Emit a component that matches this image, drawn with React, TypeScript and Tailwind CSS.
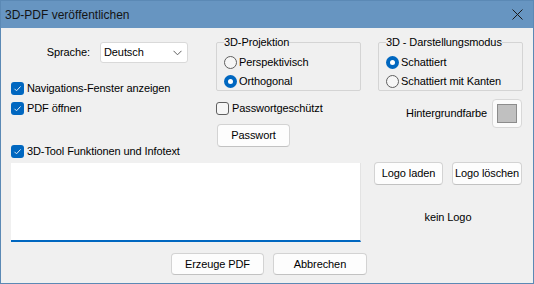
import React from "react";

function Check({ checked, label }: { checked: boolean; label: string }) {
  return (
    <div className="flex items-center h-[13px]">
      {checked ? (
        <span className="w-[13px] h-[13px] rounded-[3px] bg-[#0067c0] flex items-center justify-center shrink-0">
          <svg width="9" height="9" viewBox="0 0 9 9">
            <path d="M1.5 4.8 L3.5 6.8 L7.6 2.4" stroke="#dfeaf6" strokeWidth="1" fill="none" />
          </svg>
        </span>
      ) : (
        <span className="w-[13px] h-[13px] rounded-[3px] border border-[#5f5f5f] bg-[#f6f6f6] shrink-0" />
      )}
      <span className="ml-[3px] leading-[13px] whitespace-nowrap">{label}</span>
    </div>
  );
}

function Radio({ checked, label }: { checked: boolean; label: string }) {
  return (
    <div className="flex items-center h-[13px]">
      {checked ? (
        <span className="w-[13px] h-[13px] rounded-full bg-[#0067c0] flex items-center justify-center shrink-0">
          <span className="w-[5px] h-[5px] rounded-full bg-white" />
        </span>
      ) : (
        <span className="w-[13px] h-[13px] rounded-full border border-[#5f5f5f] bg-[#f6f6f6] shrink-0" />
      )}
      <span className="ml-[2px] leading-[13px] whitespace-nowrap">{label}</span>
    </div>
  );
}

function Group({ title, children, className }: { title: string; children: React.ReactNode; className?: string }) {
  return (
    <div className={"w-[145px] h-[49px] border border-[#d4d4d4] rounded-[2px] flex flex-col " + (className ?? "")}>
      <span className="ml-[7px] -mt-[7px] w-fit bg-[#f0f0f0] leading-[13px] whitespace-nowrap">{title}</span>
      {children}
    </div>
  );
}

function Btn({ label, className }: { label: string; className?: string }) {
  return (
    <div
      className={
        "bg-[#fdfdfd] border border-[#d3d3d3] border-b-[#c2c2c2] rounded-[4px] flex items-center justify-center whitespace-nowrap " +
        (className ?? "")
      }
    >
      {label}
    </div>
  );
}

export default function App() {
  return (
    <div
      className="w-[534px] h-[284px] border border-[#5b89b5] bg-[#f0f0f0] flex flex-col text-[11px] tracking-[-0.1px] text-black overflow-hidden"
      style={{ fontFamily: '"Liberation Sans", Arial, sans-serif' }}
    >
      <div className="h-[27px] bg-[#6795c1] flex items-center justify-between pl-[4px] pr-[10px] shrink-0">
        <span className="text-[12px] tracking-normal text-[#141414]">3D-PDF veröffentlichen</span>
        <svg width="11" height="11" viewBox="0 0 11 11">
          <path d="M0.5 0.5 L10.5 10.5 M10.5 0.5 L0.5 10.5" stroke="#1a1a1a" strokeWidth="1" />
        </svg>
      </div>

      <div className="flex pt-[13px] pl-[10px]">
        {/* left part */}
        <div className="w-[350px] flex flex-col">
          <div className="flex">
            <div className="w-[205px] flex flex-col">
              <div className="mt-[1px] h-[21px] flex items-center">
                <span className="w-[79px] text-right">Sprache:</span>
                <div className="ml-[10px] w-[88px] h-[21px] bg-white border border-[#d9d9d9] rounded-[3px] flex items-center justify-between pl-[3px] pr-[5px]">
                  <span>Deutsch</span>
                  <svg width="9" height="6" viewBox="0 0 9 6">
                    <path d="M0.5 0.8 L4.5 4.8 L8.5 0.8" stroke="#606060" strokeWidth="1" fill="none" />
                  </svg>
                </div>
              </div>
              <div className="mt-[19px]">
                <Check checked label="Navigations-Fenster anzeigen" />
              </div>
              <div className="mt-[7px]">
                <Check checked label="PDF öffnen" />
              </div>
              <div className="mt-[30px]">
                <Check checked label="3D-Tool Funktionen und Infotext" />
              </div>
            </div>
            <div className="w-[145px] flex flex-col">
              <Group title="3D-Projektion" className="mt-[1px]">
                <div className="ml-[7px] mt-[7px]">
                  <Radio checked={false} label="Perspektivisch" />
                </div>
                <div className="ml-[7px] mt-[6px]">
                  <Radio checked label="Orthogonal" />
                </div>
              </Group>
              <div className="mt-[11px]">
                <Check checked={false} label="Passwortgeschützt" />
              </div>
              <Btn label="Passwort" className="ml-[1px] mt-[9px] w-[73px] h-[23px]" />
            </div>
          </div>
          <div className="mt-[5px] h-[79px] bg-white border-r border-r-[#e3e3e3] border-b-2 border-b-[#0067c0]" />
        </div>

        {/* right part */}
        <div className="ml-[13px] w-[148px] flex flex-col">
          <Group title="3D - Darstellungsmodus" className="mt-[1px] ml-[4px] w-[144px]">
            <div className="ml-[7px] mt-[7px]">
              <Radio checked label="Schattiert" />
            </div>
            <div className="ml-[7px] mt-[6px]">
              <Radio checked={false} label="Schattiert mit Kanten" />
            </div>
          </Group>
          <div className="mt-[8px] flex justify-end items-center">
            <span className="whitespace-nowrap">Hintergrundfarbe</span>
            <div className="ml-[5px] w-[30px] h-[29px] bg-[#fbfbfb] border border-[#d8d8d8] rounded-[4px] flex items-center justify-center">
              <div className="w-[20px] h-[19px] bg-[#c0c0c0] border border-[#8c8c8c]" />
            </div>
          </div>
          <div className="mt-[34px] flex gap-[9px]">
            <Btn label="Logo laden" className="w-[69px] h-[23px]" />
            <Btn label="Logo löschen" className="w-[70px] h-[23px]" />
          </div>
          <div className="mt-[24px] text-center">kein Logo</div>
        </div>
      </div>

      <div className="mt-[11px] flex pl-[170px] gap-[9px]">
        <Btn label="Erzeuge PDF" className="w-[93px] h-[22px]" />
        <Btn label="Abbrechen" className="w-[94px] h-[22px]" />
      </div>
    </div>
  );
}
